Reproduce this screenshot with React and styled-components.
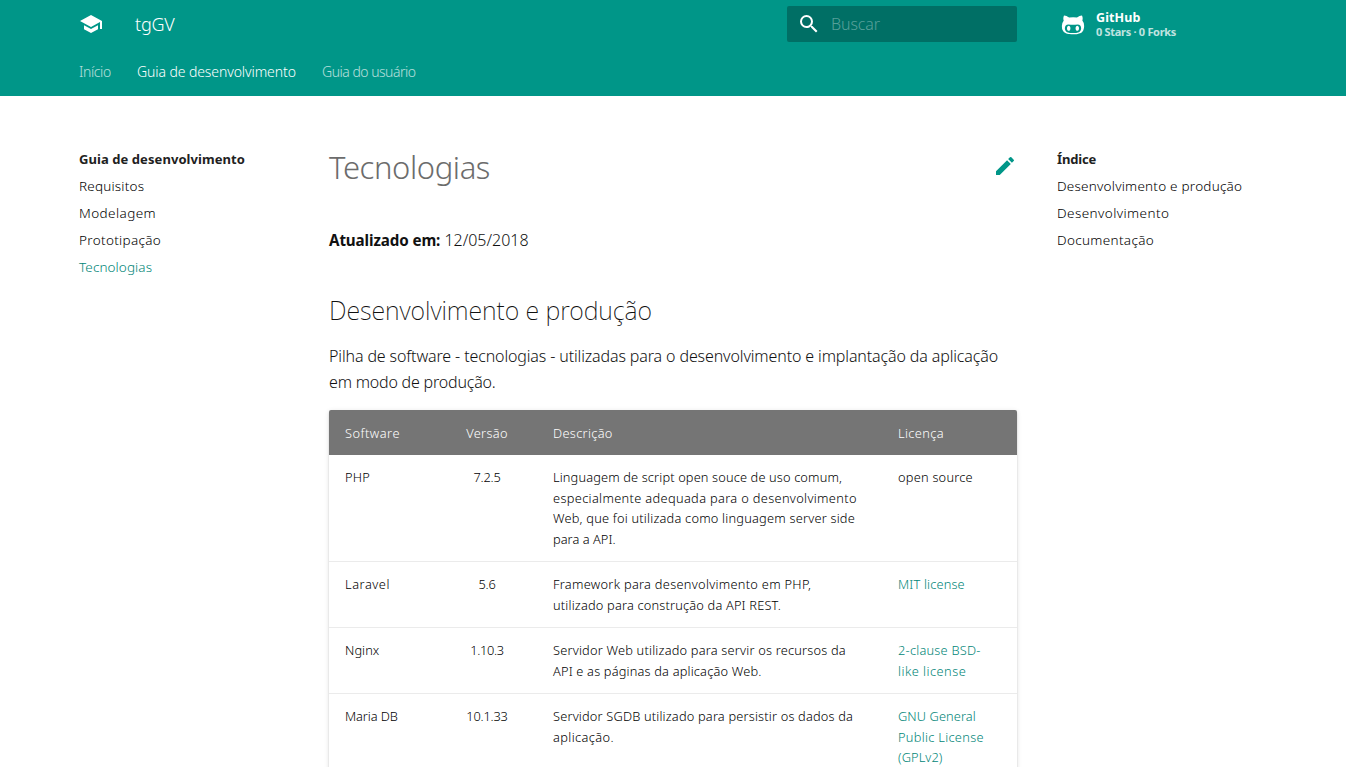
import React from "react";
import styled, { createGlobalStyle } from "styled-components";

const Global = createGlobalStyle`
  html, body { margin: 0; padding: 0; background: #fff; }
  body { font-family: "Noto Sans", sans-serif; font-weight: 300; color: rgba(0, 0, 0, 0.87); }
  * { box-sizing: border-box; }
  b { font-weight: 700; font-size: 15.2px; }
`;
const Page = styled.div`width: 1366px; height: 767px; padding-right: 20px; overflow: hidden;`;
const Header = styled.header`height: 96px; background: #009688; color: #fff;`;
const Bar = styled.div`display: flex; height: 48px; padding-left: 79px; align-items: center;`;
const Icon = styled.svg`display: block; flex: none; width: 24px; height: 24px; fill: currentColor;`;
const Brand = styled.div`flex: none; width: 684px; padding: 0 0 0 32px; font-size: 18px; line-height: 26px;`;
const Search = styled.div`
  display: flex; align-items: center; gap: 10px; width: 230px; height: 36px; padding: 0 10px;
  border-radius: 2px; background: #006f65; font-size: 16px;
`;
const Hint = styled.span`color: rgba(255, 255, 255, 0.35);`;
const Source = styled.a`
  display: flex; align-items: center; margin-left: 44px; padding-top: 1px; gap: 11px; color: #fff;
  svg { margin-bottom: 2px; }
`;
const Repo = styled.div`font-size: 12.5px; line-height: 15px; font-weight: 700; white-space: nowrap;`;
const Facts = styled.div`font-size: 11px; line-height: 14px; opacity: 0.75;`;
const Tabs = styled.nav`display: flex; height: 48px; padding-left: 79px; font-size: 14px; line-height: 48px; white-space: nowrap;`;
const Tab = styled.a`width: ${(p) => p.$w}px; opacity: ${(p) => (p.$active ? 1 : 0.7)};`;
const Body = styled.div`display: flex; padding-left: 79px; height: 671px;`;
const Side = styled.nav`width: ${(p) => p.$w}px; flex: none; padding-top: 50px; font-size: 13.5px; line-height: 27px; white-space: nowrap; color: #000;`;
const SideTitle = styled.div`font-weight: 700; font-size: 13px; color: #212121;`;
const SideLink = styled.div`color: ${(p) => (p.$active ? "#008577" : "inherit")};`;
const Article = styled.main`width: 688px; flex: none; margin-right: 40px; font-size: 16px; line-height: 26px; white-space: nowrap;`;
const TitleRow = styled.div`
  display: flex; justify-content: space-between; align-items: flex-start; height: 131px; padding-top: 50px; color: #009688;
  svg { margin-top: 8px; }
`;
const Title = styled.h1`margin: 0; font-size: 31px; line-height: 42px; font-weight: 300; color: #6c6c6c;`;
const Para = styled.p`margin: 0; height: ${(p) => p.$h}px; color: #111;`;
const Heading = styled.h2`margin: 0; padding-top: 31px; height: 81px; font-size: 25px; line-height: 35px; font-weight: 200; color: #111;`;
const Table = styled.div`
  margin-top: 14px; border-radius: 2px; font-size: 12.8px; line-height: 20.5px; color: #000;
  box-shadow: 0 2px 2px rgba(0, 0, 0, 0.14), 0 1px 5px rgba(0, 0, 0, 0.12), 0 3px 1px -2px rgba(0, 0, 0, 0.2);
`;
const Row = styled.div`
  display: grid; grid-template-columns: 108px 100px 345px 135px; height: ${(p) => p.$h}px;
  padding-top: ${(p) => (p.$head ? 13 : 12)}px;
  border-top: ${(p) => (p.$line ? "1px solid #ebebeb" : "0")};
  background: ${(p) => (p.$head ? "#757575" : "#fff")};
  color: ${(p) => (p.$head ? "#fff" : "inherit")};
  border-radius: ${(p) => (p.$head ? "2px 2px 0 0" : "0")};
`;
const Cell = styled.div`padding: 0 16px; text-align: ${(p) => (p.$center ? "center" : "left")}; color: ${(p) => (p.$link ? "#008577" : "inherit")};`;
const Line = styled.span`letter-spacing: ${(p) => p.$ls || 0}px; display: ${(p) => (p.$block ? "block" : "inline")};`;

const rows = [
  { h: 106, name: ["PHP", 0.2], version: ["7.2.5", -0.2], desc: [["Linguagem de script open souce de uso comum,", 0.14], ["especialmente adequada para o desenvolvimento", 0.34], ["Web, que foi utilizada como linguagem server side", 0.21], ["para a API.", 0.05]], lic: [["open source", 0.23]] },
  { h: 66, name: ["Laravel", 0.55], version: ["5.6", -0.2], desc: [["Framework para desenvolvimento em PHP,", 0.29], ["utilizado para construção da API REST.", 0.18]], lic: [["MIT license", 0.16]], link: true },
  { h: 66, name: ["Nginx", 0.05], version: ["1.10.3", -0.3], desc: [["Servidor Web utilizado para servir os recursos da", 0.2], ["API e as páginas da aplicação Web.", 0.18]], lic: [["2-clause BSD-", 0.23], ["like license", 0.48]], link: true },
  { h: 88, name: ["Maria DB", -0.1], version: ["10.1.33", -0.2], desc: [["Servidor SGDB utilizado para persistir os dados da", 0.18], ["aplicação.", 0.4]], lic: [["GNU General", 0.1], ["Public License", 0.3], ["(GPLv2)", 0.1]], link: true },
];
const lines = (list) => list.map(([t, ls]) => <Line key={t} $block $ls={ls}>{t}</Line>);

export default function App() {
  return (
    <Page>
      <Global />
      <Header>
        <Bar>
          <Icon viewBox="0 0 24 24"><path d="M5 13.18v4L12 21l7-3.82v-4L12 17l-7-3.82zM12 3L1 9l11 6 9-4.91V17h2V9L12 3z" /></Icon>
          <Brand><Line $ls={-0.2}>tgGV</Line></Brand>
          <Search>
            <Icon viewBox="0 0 24 24"><path d="M15.5 14h-.79l-.28-.27A6.47 6.47 0 0 0 16 9.5 6.5 6.5 0 1 0 9.5 16c1.61 0 3.09-.59 4.23-1.57l.27.28v.79l5 4.99L20.49 19l-4.99-5zm-6 0C7.01 14 5 11.99 5 9.5S7.01 5 9.5 5 14 7.01 14 9.5 11.99 14 9.5 14z" /></Icon>
            <Hint><Line $ls={-0.1}>Buscar</Line></Hint>
          </Search>
          <Source>
            <Icon viewBox="0 0 416 448"><path d="M160 304q0 10-3.125 20.5t-10.75 19-18.125 8.5-18.125-8.5-10.75-19-3.125-20.5 3.125-20.5 10.75-19 18.125-8.5 18.125 8.5 10.75 19 3.125 20.5zM320 304q0 10-3.125 20.5t-10.75 19-18.125 8.5-18.125-8.5-10.75-19-3.125-20.5 3.125-20.5 10.75-19 18.125-8.5 18.125 8.5 10.75 19 3.125 20.5zM360 304q0-30-17.25-51t-46.75-21q-10.25 0-48.75 5.25-17.75 2.75-39.25 2.75t-39.25-2.75q-38-5.25-48.75-5.25-29.5 0-46.75 21t-17.25 51q0 22 8 38.375t20.25 25.75 30.5 15 35 7.375 37.25 1.75h42q20.5 0 37.25-1.75t35-7.375 30.5-15 20.25-25.75 8-38.375zM416 260q0 51.75-15.25 82.75-9.5 19.25-26.375 33.25t-35.25 21.5-42.5 11.875-42.875 5.5-41.75 1.125q-19.5 0-35.5-0.75t-36.875-3.125-38.125-7.5-34.25-12.875-30.25-20.25-21.5-28.75q-15.5-30.75-15.5-82.75 0-59.25 34-99-6.75-20.5-6.75-42.5 0-29 12.75-54.5 27 0 47.5 9.875t47.25 30.875q36.75-8.75 77.25-8.75 37 0 70 8 26.25-20.5 46.75-30.25t47.25-9.75q12.75 25.5 12.75 54.5 0 21.75-6.75 42 34 40 34 99.5z" /></Icon>
            <Repo><Line $ls={0.1}>GitHub</Line><Facts><Line $ls={-0.3}>0 Stars · 0 Forks</Line></Facts></Repo>
          </Source>
        </Bar>
        <Tabs>
          <Tab $w={58}><Line $ls={-0.4}>Início</Line></Tab>
          <Tab $w={185} $active><Line $ls={-0.09}>Guia de desenvolvimento</Line></Tab>
          <Tab $w={120}><Line $ls={-0.5}>Guia do usuário</Line></Tab>
        </Tabs>
      </Header>
      <Body>
        <Side $w={250}>
          <SideTitle><Line $ls={0.07}>Guia de desenvolvimento</Line></SideTitle>
          <SideLink><Line $ls={0.2}>Requisitos</Line></SideLink>
          <SideLink><Line $ls={0.42}>Modelagem</Line></SideLink>
          <SideLink><Line $ls={0.33}>Prototipação</Line></SideLink>
          <SideLink $active><Line $ls={0.1}>Tecnologias</Line></SideLink>
        </Side>
        <Article>
          <TitleRow>
            <Title><Line $ls={-0.4}>Tecnologias</Line></Title>
            <Icon viewBox="0 0 24 24"><path d="M3 17.25V21h3.75L17.81 9.94l-3.75-3.75L3 17.25zM20.71 7.04a1 1 0 0 0 0-1.41l-2.34-2.34a1 1 0 0 0-1.41 0l-1.83 1.83 3.75 3.75 1.83-1.83z" /></Icon>
          </TitleRow>
          <Para $h={35}><b><Line $ls={-0.12}>Atualizado em:</Line></b> <Line>12/05/2018</Line></Para>
          <Heading><Line $ls={-0.07}>Desenvolvimento e produção</Line></Heading>
          <Para $h={53}>{lines([["Pilha de software - tecnologias - utilizadas para o desenvolvimento e implantação da aplicação", -0.127], ["em modo de produção.", -0.2]])}</Para>
          <Table>
            <Row $head $h={45}>
              <Cell><Line $ls={0.5}>Software</Line></Cell><Cell $center><Line $ls={0.3}>Versão</Line></Cell><Cell><Line $ls={0.33}>Descrição</Line></Cell><Cell><Line $ls={0.4}>Licença</Line></Cell>
            </Row>
            {rows.map((r, i) => (
              <Row key={r.name[0]} $h={r.h} $line={i > 0}>
                <Cell>{lines([r.name])}</Cell>
                <Cell $center>{lines([r.version])}</Cell>
                <Cell>{lines(r.desc)}</Cell>
                <Cell $link={r.link}>{lines(r.lic)}</Cell>
              </Row>
            ))}
          </Table>
        </Article>
        <Side $w={240}>
          <SideTitle><Line $ls={-0.15}>Índice</Line></SideTitle>
          <SideLink><Line $ls={0.23}>Desenvolvimento e produção</Line></SideLink>
          <SideLink><Line $ls={0.43}>Desenvolvimento</Line></SideLink>
          <SideLink><Line $ls={0.33}>Documentação</Line></SideLink>
        </Side>
      </Body>
    </Page>
  );
}
